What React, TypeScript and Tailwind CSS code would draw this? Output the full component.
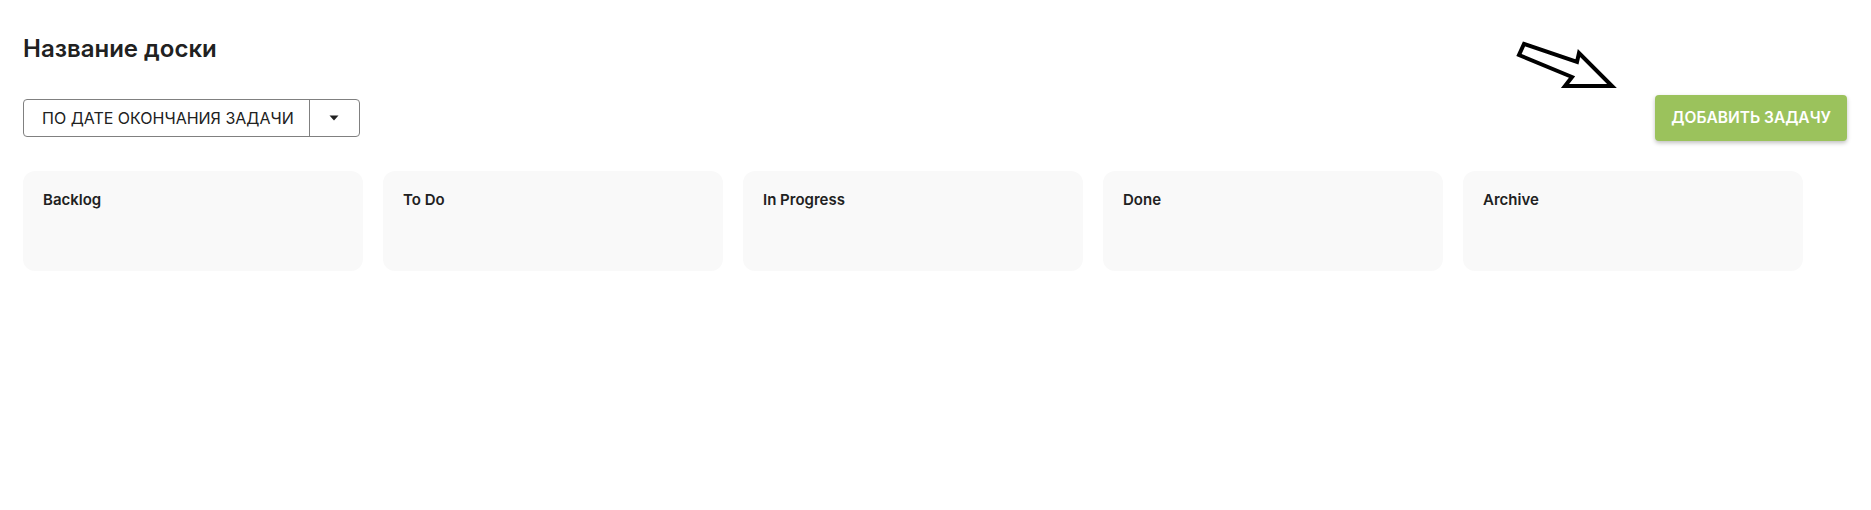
import React from "react";

const columns = ["Backlog", "To Do", "In Progress", "Done", "Archive"];

export default function App() {
  return (
    <div
      className="relative w-[1871px] h-[510px] bg-white pl-[23px] pr-[24px] pt-[33px] text-[#212121]"
      style={{ fontFamily: "Inter, 'Noto Sans', sans-serif" }}
    >
      <h1 className="text-[24px] leading-[32px] font-semibold">Название доски</h1>

      <div className="mt-[30px] flex h-[46px] items-center justify-between">
        <div className="flex h-[38px] items-stretch rounded-[4px] border border-[#808080]">
          <div className="flex items-center pl-[18px] pr-[15px] text-[16px] leading-none uppercase">
            По дате окончания задачи
          </div>
          <div className="flex w-[50px] items-center justify-center border-l border-[#808080]">
            <svg width="10" height="6" viewBox="0 0 10 6">
              <path d="M0.5 0.5 H9.5 L5 5.5 Z" fill="#212121" />
            </svg>
          </div>
        </div>

        <button className="h-[46px] rounded-[4px] bg-[#9bc25c] px-[16px] text-[15.5px] font-semibold uppercase text-white shadow-[0_2px_4px_rgba(0,0,0,0.25)]">
          Добавить задачу
        </button>
      </div>

      <div className="mt-[30px] flex gap-5">
        {columns.map((c) => (
          <div key={c} className="h-[100px] w-[340px] rounded-xl bg-[#f9f9f9] px-5 pt-[17px]">
            <div className="text-[15px] leading-6 font-semibold">{c}</div>
          </div>
        ))}
      </div>

      <svg
        className="absolute left-[1510px] top-[35px]"
        width="120"
        height="65"
        viewBox="0 0 120 65"
      >
        <polygon
          points="14,9 67,27 69,18 102,51 55,51 62,42 9,20"
          fill="white"
          stroke="black"
          strokeWidth="4"
          strokeLinejoin="miter"
        />
      </svg>
    </div>
  );
}
